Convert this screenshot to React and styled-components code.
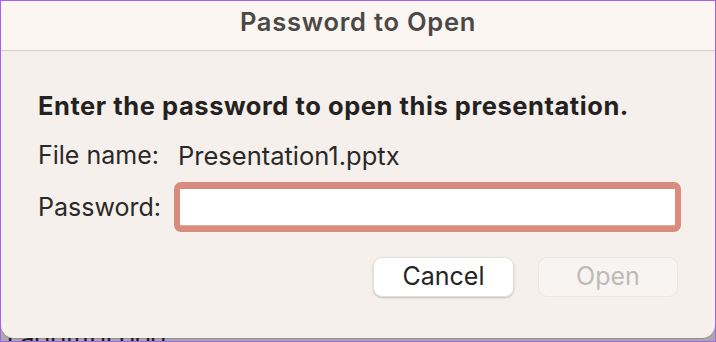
import React from 'react';
import styled, { createGlobalStyle } from 'styled-components';

const GlobalStyle = createGlobalStyle`
    html, body {
        margin: 0;
        padding: 0;
        width: 716px;
        height: 342px;
        overflow: hidden;
        background: #a7a7a7;
    }
    * {
        box-sizing: border-box;
    }
`;

const Frame = styled.div`
    width: 716px;
    height: 342px;
    border: 1px solid #a95ff0;
    display: flex;
    flex-direction: column;
    background: #a9aaa8;
    overflow: hidden;
    font-family: Inter, "Liberation Sans", sans-serif;
`;

const Dialog = styled.div`
    height: 337px;
    flex-shrink: 0;
    display: flex;
    flex-direction: column;
    background: #f5f0ec;
    border-radius: 0 0 13px 13px;
    box-shadow: 0 1px 1px rgba(0, 0, 0, 0.15);
`;

const TitleBar = styled.div`
    height: 50px;
    display: flex;
    align-items: center;
    justify-content: center;
    background: #fbf6f2;
    border-bottom: 1px solid #d2cdc9;
    color: #4b4948;
    font-size: 25.5px;
    font-weight: 600;
    letter-spacing: 0.75px;
    padding-bottom: 8px;
`;

const Body = styled.div`
    flex: 1;
    display: flex;
    flex-direction: column;
    padding: 40px 34px 0 37px;
`;

const Heading = styled.h2`
    margin: 0 0 19px;
    font-size: 25.5px;
    font-weight: 700;
    color: #232221;
    line-height: 30px;
    letter-spacing: 0.55px;
`;

const Row = styled.div`
    display: flex;
    align-items: center;
    height: ${p => p.$h || 30}px;
    margin-bottom: ${p => p.$mb || 0}px;
    font-size: 25px;
    color: #2a2928;
`;

const Label = styled.span`
    width: ${p => p.$w}px;
    flex-shrink: 0;
`;

const Value = styled.span`
    font-size: 25.5px;
`;

const Field = styled.div`
    flex: 1;
    height: 50px;
    background: #ffffff;
    border: 6px solid #d98c7d;
    border-radius: 7px;
    box-shadow: inset 0 1px 0 #cf8a7c, inset 0 -1px 0 #e2a99d;
`;

const Buttons = styled.div`
    display: flex;
    justify-content: flex-end;
    gap: 24px;
    margin-top: 25px;
    padding-right: 3px;
`;

const Button = styled.button`
    width: ${p => p.$w || 140}px;
    height: 40px;
    border-radius: 9px;
    font-family: inherit;
    font-size: 25px;
    background: ${p => (p.$disabled ? '#f7f4f2' : '#ffffff')};
    color: ${p => (p.$disabled ? '#bdbbb9' : '#252423')};
    border: 1px solid ${p => (p.$disabled ? '#ebe7e3' : '#e4e0dc')};
    box-shadow: ${p => (p.$disabled ? 'none' : '0 1px 2px rgba(0, 0, 0, 0.22)')};
    padding: 0 0 2px;
`;

const Strip = styled.div`
    flex: 1;
    overflow: hidden;
`;

const BehindText = styled.div`
    margin-top: -13px;
    margin-left: -4px;
    font-size: 26px;
    line-height: 26px;
    color: #1b1b1b;
    white-space: nowrap;
`;

export default function App() {
    return (
        <>
            <GlobalStyle />
            <Frame>
                <Dialog>
                    <TitleBar>Password to Open</TitleBar>
                    <Body>
                        <Heading>Enter the password to open this presentation.</Heading>
                        <Row $h={30} $mb={12}>
                            <Label $w={140}>File name:</Label>
                            <Value>Presentation1.pptx</Value>
                        </Row>
                        <Row $h={50}>
                            <Label $w={136}>Password:</Label>
                            <Field />
                        </Row>
                        <Buttons>
                            <Button $w={141}>Cancel</Button>
                            <Button $disabled disabled>Open</Button>
                        </Buttons>
                    </Body>
                </Dialog>
                <Strip>
                    <BehindText>o addiffol ood</BehindText>
                </Strip>
            </Frame>
        </>
    );
}
